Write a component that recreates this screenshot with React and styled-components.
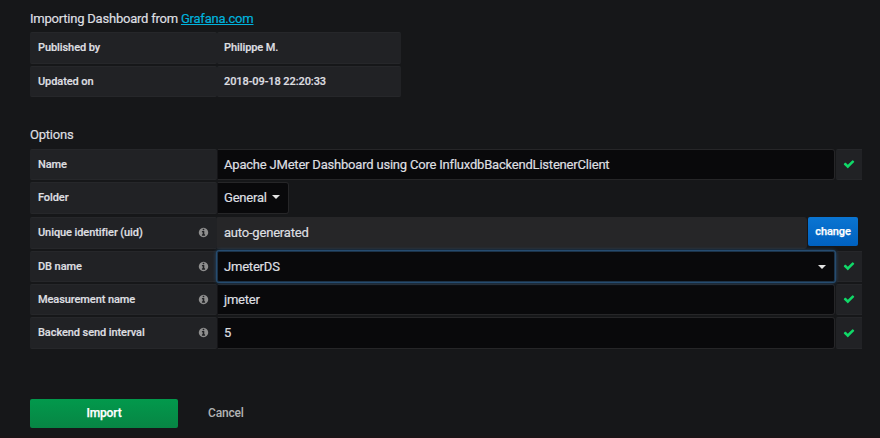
import React from 'react';
import styled, { createGlobalStyle, css } from 'styled-components';

const GlobalStyle = createGlobalStyle`
  * { box-sizing: border-box; }
  html, body { margin: 0; background: #161719; }
  body { font-family: Roboto, sans-serif; color: #dedfe0; overflow: hidden; }
`;

const Page = styled.main`
  display: flex;
  flex-direction: column;
  width: 880px;
  height: 438px;
  padding: 9px 18px 0 30px;
  background: #161719;
  border-bottom: 2px solid #1a1517;
`;

const Heading = styled.h6`
  margin: 0;
  height: ${(p) => p.$height}px;
  font-size: 13px;
  line-height: 20px;
  font-weight: 400;
  letter-spacing: -0.22px;
  -webkit-text-stroke: 0.2px currentColor;
`;

const Link = styled.a`
  color: #00b3dd;
  text-decoration: underline;
`;

const Rows = styled.section`
  display: flex;
  flex-direction: column;
  margin-bottom: ${(p) => p.$after}px;
`;

const Row = styled.div`
  display: flex;
  height: ${(p) => p.$height || 31}px;
  margin-bottom: ${(p) => p.$gap ?? 2}px;
`;

const Cell = styled.div`
  display: flex;
  align-items: center;
  justify-content: space-between;
  width: ${(p) => p.$width || 187}px;
  padding: 0 8px 1px;
  padding-left: ${(p) => p.$inset || 8}px;
  background: #212225;
  border: 1px solid #26272a;
  border-width: 1px 0;
  border-radius: 2px;
  font-size: 11px;
  font-weight: 500;
  letter-spacing: -0.08px;
  -webkit-text-stroke: 0.2px currentColor;
`;

const Field = styled.div`
  display: flex;
  align-items: center;
  justify-content: space-between;
  width: ${(p) => p.$width || 618}px;
  padding: 0 8px ${(p) => p.$lift || 0}px 6px;
  background: #09090b;
  border: 1px solid #262628;
  border-left-color: #151518;
  border-radius: 0 3px 3px 0;
  font-size: 13px;
  letter-spacing: -0.2px;
  -webkit-text-stroke: 0.2px currentColor;
  ${(p) => p.$readonly && css`
    background: #262628;
    border-left-color: #262628;
  `}
  ${(p) => p.$focused && css`
    z-index: 1;
    border-color: #1c3349;
    border-radius: 2px;
    box-shadow: 0 0 0 1px #264c70, 0 0 4px #2b669e;
  `}
`;

const Status = styled.div`
  display: flex;
  align-items: center;
  justify-content: center;
  width: 26px;
  margin-left: 1px;
  padding-bottom: 1px;
  background: #212225;
  border: 1px solid #26272a;
  border-width: 1px 0;
  border-radius: 2px 0 0 2px;
`;

const Caret = styled.span`
  border: 4px solid transparent;
  border-top-color: #e3e3e3;
  border-bottom: 0;
`;

const ChangeButton = styled.button`
  width: 50px;
  height: 29px;
  margin-left: 1px;
  padding: 0;
  border: 0;
  border-radius: 2px;
  background: linear-gradient(#0a75d2, #0061c0);
  color: #fff;
  font: 500 11px Roboto, sans-serif;
  letter-spacing: -0.1px;
  -webkit-text-stroke: 0.25px currentColor;
`;

const Actions = styled.div`
  display: flex;
  align-items: center;
  gap: 30px;
`;

const ImportButton = styled.button`
  width: 148px;
  height: 29px;
  padding: 0 0 1px;
  border: 0;
  border-radius: 2px;
  background: linear-gradient(#02994c, #078544);
  color: #fff;
  font: 500 12px Roboto, sans-serif;
  letter-spacing: -0.15px;
  -webkit-text-stroke: 0.25px currentColor;
`;

const Cancel = styled.a`
  padding-bottom: 1px;
  color: #b2b3b4;
  font-size: 12px;
  font-weight: 500;
  letter-spacing: -0.2px;
`;

const Check = () => (
  <svg width="12" height="12" viewBox="0 0 1792 1792" fill="#10d968" aria-hidden="true">
    <path d="M1671 566q0 40-28 68l-724 724-136 136q-28 28-68 28t-68-28l-136-136-362-362q-28-28-28-68t28-68l136-136q28-28 68-28t68 28l294 295 656-657q28-28 68-28t68 28l136 136q28 28 28 68z" />
  </svg>
);

const Info = () => (
  <svg width="11" height="11" viewBox="0 0 1792 1792" fill="#8e8e8e" aria-hidden="true">
    <path d="M1152 1376v-160q0-14-9-23t-23-9h-96v-512q0-14-9-23t-23-9h-320q-14 0-23 9t-9 23v160q0 14 9 23t23 9h96v320h-96q-14 0-23 9t-9 23v160q0 14 9 23t23 9h448q14 0 23-9t9-23zm-128-896v-160q0-14-9-23t-23-9h-192q-14 0-23 9t-9 23v160q0 14 9 23t23 9h192q14 0 23-9t9-23zm640 416q0 209-103 385.500t-279.500 279.500-385.500 103-385.500-103-279.500-279.500-103-385.500 103-385.500 279.500-279.500 385.500-103 385.500 103 279.500 279.500 103 385.500z" />
  </svg>
);

const Label = ({ text, info }) => (
  <Cell>
    <span>{text}</span>
    {info && <Info />}
  </Cell>
);

export default function App() {
  return (
    <>
      <GlobalStyle />
      <Page>
        <Heading $height={23}>
          Importing Dashboard from <Link>Grafana.com</Link>
        </Heading>
        <Rows $after={28}>
          <Row $height={32}>
            <Label text="Published by" />
            <Cell $width={184} $inset={7}>Philippe M.</Cell>
          </Row>
          <Row $gap={0}>
            <Label text="Updated on" />
            <Cell $width={184} $inset={7}>2018-09-18 22:20:33</Cell>
          </Row>
        </Rows>
        <Heading $height={24}>Options</Heading>
        <Rows $after={50}>
          <Row>
            <Label text="Name" />
            <Field>Apache JMeter Dashboard using Core InfluxdbBackendListenerClient</Field>
            <Status><Check /></Status>
          </Row>
          <Row $height={32} $gap={3}>
            <Label text="Folder" />
            <Field $width={72} $lift={2}>General <Caret /></Field>
          </Row>
          <Row $height={32}>
            <Label text="Unique identifier (uid)" info />
            <Field $width={590} $lift={2} $readonly>auto-generated</Field>
            <ChangeButton>change</ChangeButton>
          </Row>
          <Row>
            <Label text="DB name" info />
            <Field $focused>JmeterDS <Caret /></Field>
            <Status><Check /></Status>
          </Row>
          <Row>
            <Label text="Measurement name" info />
            <Field>jmeter</Field>
            <Status><Check /></Status>
          </Row>
          <Row $height={32} $gap={0}>
            <Label text="Backend send interval" info />
            <Field $lift={2}>5</Field>
            <Status><Check /></Status>
          </Row>
        </Rows>
        <Actions>
          <ImportButton>Import</ImportButton>
          <Cancel>Cancel</Cancel>
        </Actions>
      </Page>
    </>
  );
}
